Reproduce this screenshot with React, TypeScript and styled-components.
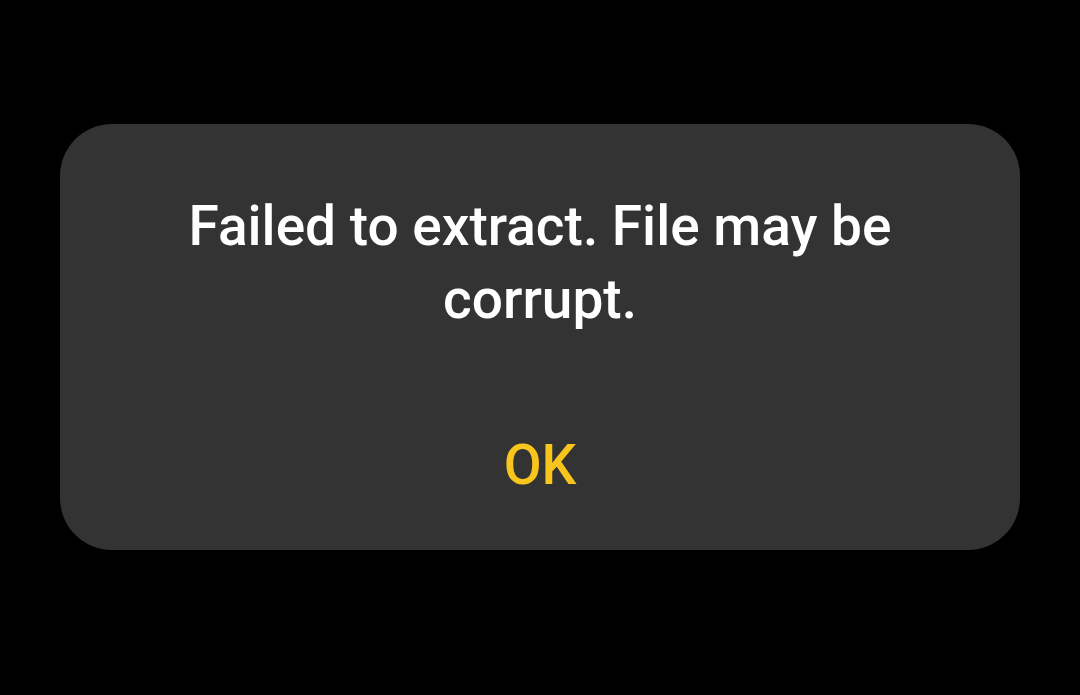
import React from 'react';
import styled, { createGlobalStyle } from 'styled-components';

const GlobalStyle = createGlobalStyle`
  html, body {
    margin: 0;
    padding: 0;
    background: #000;
  }
  body {
    font-family: Roboto, "Noto Sans", sans-serif;
  }
`;

const Screen = styled.div`
  width: 1080px;
  height: 695px;
  background: #000;
  display: flex;
  justify-content: center;
  padding-top: 124px;
  box-sizing: border-box;
`;

const Dialog = styled.div`
  width: 960px;
  height: 426px;
  box-sizing: border-box;
  background: #333333;
  border-radius: 52px;
  padding: 66px 60px 0;
  display: flex;
  flex-direction: column;
  align-items: center;
`;

const Message = styled.p`
  margin: 0;
  color: #ffffff;
  font-size: 55px;
  font-weight: 500;
  line-height: 73px;
  text-align: center;
  width: 780px;
`;

const OkButton = styled.button`
  margin-top: 83px;
  padding: 10px 30px;
  background: none;
  border: none;
  color: #f8c51c;
  font-family: Roboto, "Noto Sans", sans-serif;
  font-size: 55px;
  font-weight: 500;
  line-height: 73px;
  cursor: pointer;
`;

function App() {
  return <>
    <GlobalStyle />
    <Screen>
      <Dialog>
        <Message>Failed to extract. File may be corrupt.</Message>
        <OkButton>OK</OkButton>
      </Dialog>
    </Screen>
  </>;
}

export default App;
